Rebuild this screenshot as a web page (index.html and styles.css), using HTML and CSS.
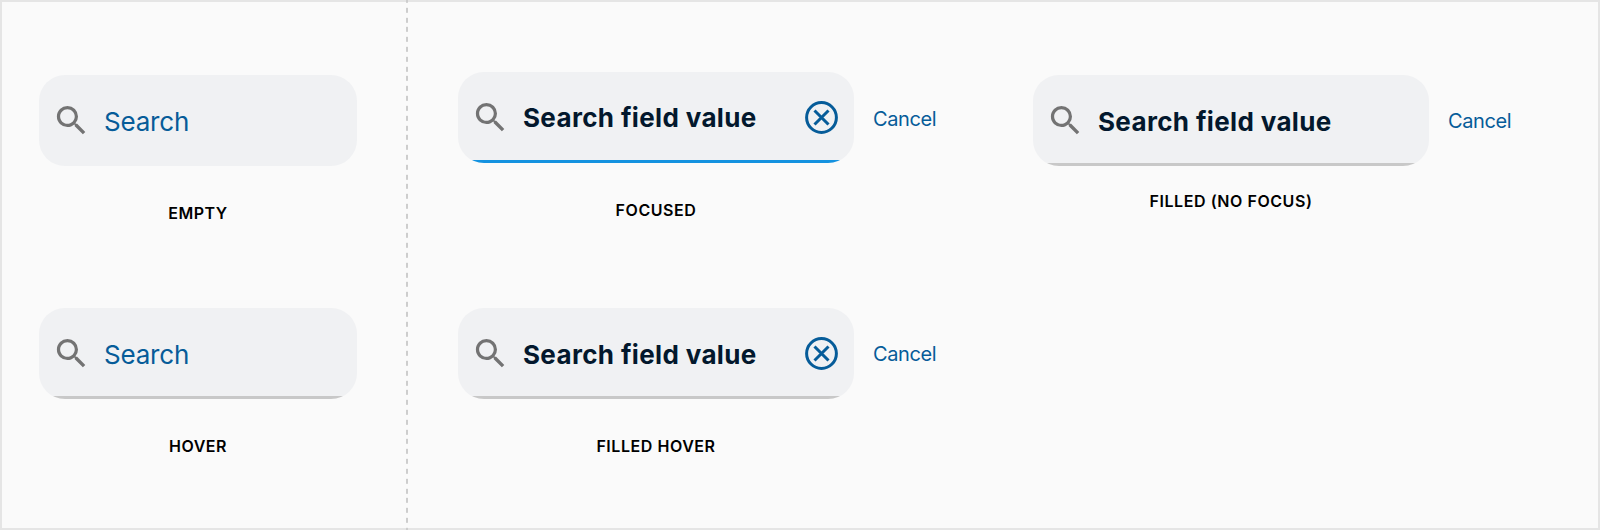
FILE: index.html
```
<!DOCTYPE html>
<html lang="en">

<head>
    <title>Search field states</title>
    <meta charset="utf-8" />
    <meta name="viewport" content="width=device-width,initial-scale=1" />
    <link rel="stylesheet" href="styles.css">
</head>

<body>

    <svg class="sprite">
        <symbol id="icon-search" viewBox="0 0 24 24">
            <path d="M15.5 14h-.79l-.28-.27A6.471 6.471 0 0 0 16 9.5 6.5 6.5 0 1 0 9.5 16c1.61 0 3.09-.59 4.23-1.57l.27.28v.79l5 4.99L20.49 19l-4.99-5zm-6 0C7.01 14 5 11.99 5 9.5S7.01 5 9.5 5 14 7.01 14 9.5 11.99 14 9.5 14z" />
        </symbol>
        <symbol id="icon-clear" viewBox="0 0 33 33">
            <circle cx="16.5" cy="16.5" r="14.9" />
            <path d="M9.5 9.5l14 14M23.5 9.5l-14 14" />
        </symbol>
    </svg>

    <div class="board">
        <div class="panel panelEmpty">
            <div class="state">
                <div class="row">
                    <div class="field">
                        <svg class="searchIcon"><use href="#icon-search" /></svg>
                        <span class="placeholder">Search</span>
                    </div>
                </div>
                <div class="label">EMPTY</div>
            </div>
            <div class="state">
                <div class="row">
                    <div class="field underline">
                        <svg class="searchIcon"><use href="#icon-search" /></svg>
                        <span class="placeholder">Search</span>
                    </div>
                </div>
                <div class="label">HOVER</div>
            </div>
        </div>

        <div class="divider"></div>

        <div class="panel panelFilled">
            <div class="state stateFocused">
                <div class="row">
                    <div class="field underline focused">
                        <svg class="searchIcon"><use href="#icon-search" /></svg>
                        <span class="value">Search field value</span>
                        <svg class="clearIcon"><use href="#icon-clear" /></svg>
                    </div>
                    <a class="cancel">Cancel</a>
                </div>
                <div class="label">FOCUSED</div>
            </div>
            <div class="state stateFilled">
                <div class="row">
                    <div class="field underline">
                        <svg class="searchIcon"><use href="#icon-search" /></svg>
                        <span class="value">Search field value</span>
                    </div>
                    <a class="cancel">Cancel</a>
                </div>
                <div class="label">FILLED (NO FOCUS)</div>
            </div>
            <div class="state">
                <div class="row">
                    <div class="field underline">
                        <svg class="searchIcon"><use href="#icon-search" /></svg>
                        <span class="value">Search field value</span>
                        <svg class="clearIcon"><use href="#icon-clear" /></svg>
                    </div>
                    <a class="cancel">Cancel</a>
                </div>
                <div class="label">FILLED HOVER</div>
            </div>
        </div>
    </div>

</body>

</html>
```
FILE: styles.css
```
* {
    box-sizing: border-box;
}

body {
    margin: 0;
    background-color: #fafafa;
    font-family: Inter, "Liberation Sans", sans-serif;
}

.sprite {
    display: none;
}

.board {
    display: flex;
    height: 530px;
    border: 2px solid #e5e5e5;
    background-color: #fafafa;
}

.panel {
    display: grid;
    grid-auto-rows: 233px;
    padding-top: 73px;
}

.panelEmpty {
    grid-template-columns: 318px;
    width: 404px;
    padding-left: 37px;
}

.panelFilled {
    grid-template-columns: 575px 500px;
    padding-left: 50px;
}

.divider {
    width: 2px;
    margin: -2px 0;
    background: repeating-linear-gradient(#cdcdcd 0 5px, transparent 5px 9.81px) 0 -2.2px;
}

.row {
    display: flex;
    align-items: center;
    gap: 19px;
}

.field {
    display: flex;
    align-items: center;
    flex: none;
    width: 396px;
    height: 91px;
    padding: 0 16px 0 13px;
    border-radius: 26px;
    background-color: #f0f1f3;
    font-size: 26px;
    line-height: 32px;
}

.panelEmpty .field {
    width: 318px;
}

.underline {
    background-image: linear-gradient(#c8c8c8, #c8c8c8);
    background-position: bottom;
    background-size: 100% 3px;
    background-repeat: no-repeat;
}

.focused {
    background-image: linear-gradient(#1492e0, #1492e0);
}

.searchIcon {
    flex: none;
    width: 39px;
    height: 39px;
    margin-right: 13px;
    fill: #737373;
}

.clearIcon {
    flex: none;
    width: 33px;
    height: 33px;
    margin-left: auto;
    fill: none;
    stroke: #065c99;
    stroke-width: 3;
}

.placeholder {
    padding-top: 2px;
    color: #065c99;
    letter-spacing: -0.2px;
}

.value {
    padding-top: 2px;
    color: #03182d;
    font-weight: 700;
    letter-spacing: 0.35px;
}

.cancel {
    color: #065c99;
    font-size: 20px;
    line-height: 24px;
    letter-spacing: -0.4px;
}

.label {
    width: 396px;
    margin-top: 37px;
    color: #000;
    font-size: 16px;
    font-weight: 600;
    line-height: 20px;
    letter-spacing: 0.55px;
    text-align: center;
}

.panelEmpty .label {
    width: 318px;
}

.stateFocused {
    margin-top: -3px;
}

.stateFocused .value {
    padding-top: 1px;
}

.stateFocused .cancel {
    padding-top: 3px;
}

.stateFilled .label {
    margin-top: 25px;
}
```
